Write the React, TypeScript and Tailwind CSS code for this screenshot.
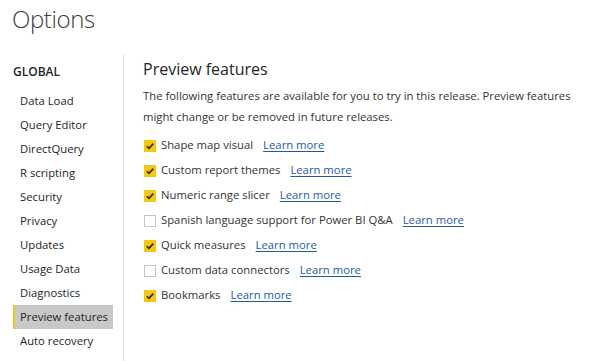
const navItems = [
  "Data Load",
  "Query Editor",
  "DirectQuery",
  "R scripting",
  "Security",
  "Privacy",
  "Updates",
  "Usage Data",
  "Diagnostics",
  "Preview features",
  "Auto recovery",
];

const features = [
  { label: "Shape map visual", on: true },
  { label: "Custom report themes", on: true },
  { label: "Numeric range slicer", on: true },
  { label: "Spanish language support for Power BI Q&A", on: false },
  { label: "Quick measures", on: true },
  { label: "Custom data connectors", on: false },
  { label: "Bookmarks", on: true },
];

function CheckBox({ on }: { on: boolean }) {
  if (!on) {
    return (
      <span className="w-[12px] h-[12px] border border-[#c4c4c4] bg-white shrink-0" />
    );
  }
  return (
    <span className="w-[12px] h-[12px] bg-[#f2c811] shrink-0 flex items-center justify-center">
      <svg width="10" height="10" viewBox="0 0 10 10">
        <path d="M1.8 5.2 L4 7.4 L8.3 2.6" fill="none" stroke="#2b2b2b" strokeWidth="1.6" />
      </svg>
    </span>
  );
}

export default function App() {
  return (
    <div className="w-[590px] h-[361px] bg-white text-[#333333] overflow-hidden font-['Open_Sans',sans-serif]">
      <div className="h-[54px] pl-[12px] pt-[3px] text-[24px] leading-[32px] font-light tracking-[-0.4px] text-[#3c3c3c]">
        Options
      </div>
      <div className="flex">
        <div className="w-[124px] h-[307px] border-r border-[#e3e3e3]">
          <div className="mt-[6px] mb-[5px] h-[24px] leading-[24px] pl-[13px] text-[12px] font-semibold text-[#252525]">
            GLOBAL
          </div>
          {navItems.map((item) => (
            <div
              key={item}
              className={
                item === "Preview features"
                  ? "ml-[13px] w-[100px] h-[24px] leading-[24px] pl-[5px] border-l-2 border-[#f2c811] bg-[#c8c8c8] text-[11.3px] whitespace-nowrap text-[#252525]"
                  : "ml-[13px] w-[100px] h-[24px] leading-[24px] pl-[5px] border-l-2 border-transparent text-[11.3px] whitespace-nowrap text-[#252525]"
              }
            >
              {item}
            </div>
          ))}
        </div>
        <div className="pl-[19px]">
          <div className="pt-[3px] h-[27px] leading-[24px] text-[16px] text-[#252525]">
            Preview features
          </div>
          <p className="mt-[4px] w-[440px] text-[11.3px] leading-[21px]">
            The following features are available for you to try in this release. Preview features
            might change or be removed in future releases.
          </p>
          <div className="mt-[6px]">
            {features.map((f) => (
              <div key={f.label} className="h-[25px] flex items-center pl-[1px] text-[11.3px] whitespace-nowrap">
                <CheckBox on={f.on} />
                <span className="ml-[5px] text-[#333333]">{f.label}</span>
                <a href="#" className="ml-[10px] text-[#1d5aa9] underline underline-offset-2">
                  Learn more
                </a>
              </div>
            ))}
          </div>
        </div>
      </div>
    </div>
  );
}
